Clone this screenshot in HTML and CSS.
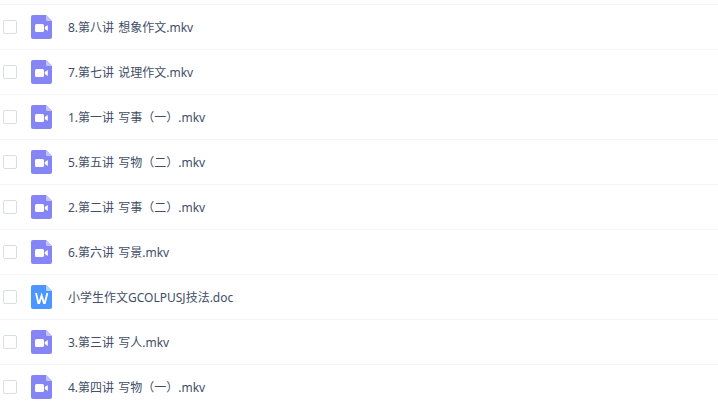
FILE: index.html
```html
<!DOCTYPE html>
<html lang="zh-CN">
<head>
    <meta charset="UTF-8">
    <title>文件列表</title>
    <link rel="stylesheet" href="styles.css">
</head>
<body>
    <svg class="defs" width="0" height="0">
        <symbol id="icon-video" viewBox="0 0 21 24">
            <path d="M2 0H15L21 6V22a2 2 0 0 1-2 2H2a2 2 0 0 1-2-2V2a2 2 0 0 1 2-2Z" fill="#8585f5"/>
            <path d="M15 0L21 6H16a1 1 0 0 1-1-1Z" fill="#c4c4fa"/>
            <rect x="4" y="9" width="9" height="8" rx="1.5" fill="#fff"/>
            <path d="M13.8 12L16.8 10V16L13.8 14Z" fill="#fff"/>
        </symbol>
        <symbol id="icon-word" viewBox="0 0 21 24">
            <path d="M2 0H15L21 6V22a2 2 0 0 1-2 2H2a2 2 0 0 1-2-2V2a2 2 0 0 1 2-2Z" fill="#4c97ff"/>
            <path d="M15 0L21 6H16a1 1 0 0 1-1-1Z" fill="#b5d3ff"/>
            <path d="M5 8L7.4 18H8.2L10.6 10.5L13 18H13.8L16.4 8" fill="none" stroke="#fff" stroke-width="1.9"/>
        </symbol>
    </svg>

    <!-- 文件列表 -->
    <ul class="file-list">
        <li class="file-row">
            <span class="check"></span>
            <svg class="file-icon"><use href="#icon-video"/></svg>
            <span class="file-name">8.第八讲 想象作文.mkv</span>
        </li>
        <li class="file-row">
            <span class="check"></span>
            <svg class="file-icon"><use href="#icon-video"/></svg>
            <span class="file-name">7.第七讲 说理作文.mkv</span>
        </li>
        <li class="file-row">
            <span class="check"></span>
            <svg class="file-icon"><use href="#icon-video"/></svg>
            <span class="file-name">1.第一讲 写事（一）.mkv</span>
        </li>
        <li class="file-row">
            <span class="check"></span>
            <svg class="file-icon"><use href="#icon-video"/></svg>
            <span class="file-name">5.第五讲 写物（二）.mkv</span>
        </li>
        <li class="file-row">
            <span class="check"></span>
            <svg class="file-icon"><use href="#icon-video"/></svg>
            <span class="file-name">2.第二讲 写事（二）.mkv</span>
        </li>
        <li class="file-row">
            <span class="check"></span>
            <svg class="file-icon"><use href="#icon-video"/></svg>
            <span class="file-name">6.第六讲 写景.mkv</span>
        </li>
        <li class="file-row">
            <span class="check"></span>
            <svg class="file-icon"><use href="#icon-word"/></svg>
            <span class="file-name">小学生作文GCOLPUSJ技法.doc</span>
        </li>
        <li class="file-row">
            <span class="check"></span>
            <svg class="file-icon"><use href="#icon-video"/></svg>
            <span class="file-name">3.第三讲 写人.mkv</span>
        </li>
        <li class="file-row">
            <span class="check"></span>
            <svg class="file-icon"><use href="#icon-video"/></svg>
            <span class="file-name">4.第四讲 写物（一）.mkv</span>
        </li>
    </ul>
</body>
</html>
```

FILE: styles.css
```css
html, body {
    height: 100%;
    overflow: hidden;
}
body {
    margin: 0;
    background-color: #fff;
    font-family: "Noto Sans", "Noto Sans CJK SC", sans-serif;
    color: #424e67;
}
.defs {
    position: absolute;
}
.file-list {
    list-style: none;
    margin: 4px 0 0;
    padding: 0;
    border-top: 1px solid #f4f6fb;
}
.file-row {
    display: flex;
    align-items: center;
    box-sizing: border-box;
    height: 45px;
    padding: 0 0 0 3px;
    border-bottom: 1px solid #f4f6fb;
}
.check {
    box-sizing: border-box;
    width: 14px;
    height: 14px;
    margin-right: 14px;
    border: 1px solid #d8dee8;
    border-radius: 2px;
}
.file-icon {
    width: 21px;
    height: 24px;
    margin-right: 16px;
}
.file-name {
    padding-top: 2px;
    font-size: 12px;
    line-height: 18px;
    word-spacing: 1px;
}
```
